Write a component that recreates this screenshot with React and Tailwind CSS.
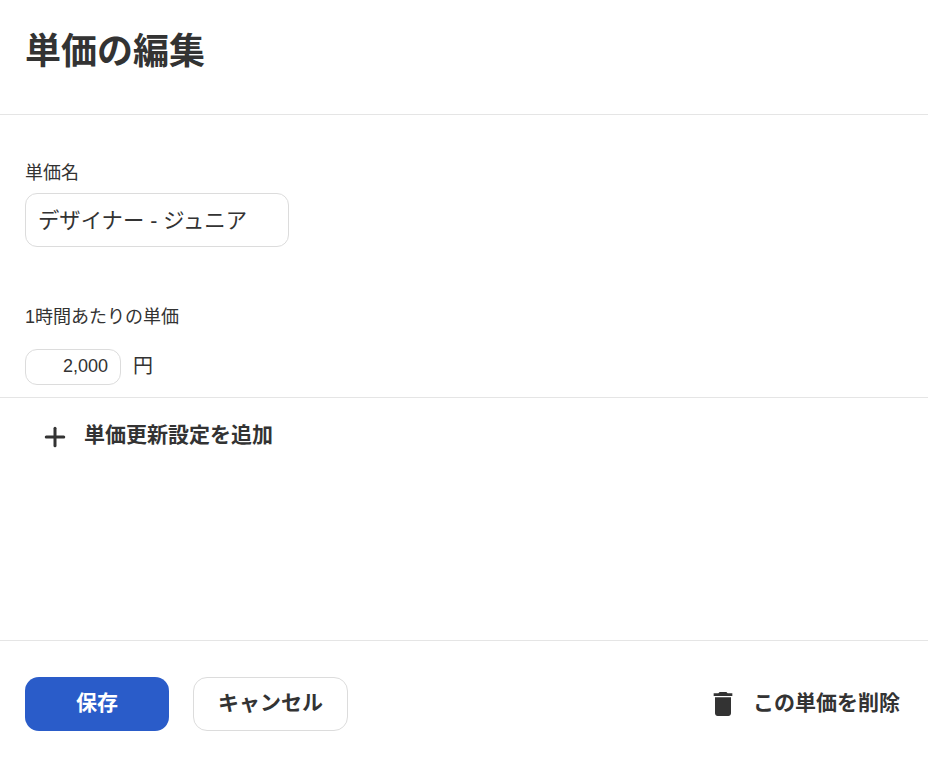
import React from "react";
import { Plus } from "lucide-react";

const font = "font-['Liberation_Sans','Noto_Sans_CJK_JP',sans-serif]";

const TrashIcon = () => (
    <svg className="mt-0.5" width="32" height="32" viewBox="0 0 24 24" fill="currentColor">
        <path d="M6 19c0 1.1.9 2 2 2h8c1.1 0 2-.9 2-2V7H6v12zM19 4h-3.5l-1-1h-5l-1 1H5v2h14V4z" />
    </svg>
);

const App = () => {
    return (
        <div className={`${font} flex h-[757px] w-[928px] flex-col bg-white text-[#333333]`}>

            {/* Header */}
            <header className="h-[115px] border-b border-[#e5e5e5] px-[25px] pt-[28px]">
                <h1 className="text-[36px] leading-[48px] font-bold">単価の編集</h1>
            </header>

            {/* Form */}
            <section className="h-[283px] border-b border-[#e5e5e5] px-[25px] pt-[45px]">
                <label className="block text-[18px] leading-[26px]">単価名</label>
                <input
                    readOnly
                    value="デザイナー - ジュニア"
                    className="mt-[7px] block h-[54px] w-[264px] rounded-xl border border-[#dcdcdc] px-3 pb-1 text-[21.33px] outline-none"
                />
                <label className="mt-[57px] block text-[18px] leading-[26px]">1時間あたりの単価</label>
                <div className="mt-[19px] flex items-center gap-3">
                    <input
                        readOnly
                        value="2,000"
                        className="block h-[36px] w-[96px] rounded-xl border border-[#dcdcdc] px-3 pb-0.5 text-right text-[18px] outline-none"
                    />
                    <span className="-mt-0.5 text-[20px]">円</span>
                </div>
            </section>

            {/* Add rate update */}
            <div className="h-[243px] border-b border-[#e5e5e5] pl-[40px] pt-[22px]">
                <button className="flex items-center gap-[14px] text-[21px] leading-[36px] font-bold text-[#333333]">
                    <Plus size={30} strokeWidth={3} absoluteStrokeWidth />
                    <span className="-mt-[3px]">単価更新設定を追加</span>
                </button>
            </div>

            {/* Footer */}
            <footer className="flex flex-1 items-start justify-between pl-[25px] pr-[28px] pt-[36px]">
                <div className="flex gap-6">
                    <button className="h-[54px] w-[144px] rounded-[14px] bg-[#2a5cc9] pb-0.5 text-[21px] font-bold text-white">保存</button>
                    <button className="h-[54px] w-[155px] rounded-[14px] border border-[#dcdcdc] bg-white pb-0.5 text-[21px] font-bold">キャンセル</button>
                </div>
                <button className="-mt-px flex h-[54px] items-center gap-[14px] text-[21px] font-bold">
                    <TrashIcon />
                    この単価を削除
                </button>
            </footer>
        </div>
    );
};

export default App;
